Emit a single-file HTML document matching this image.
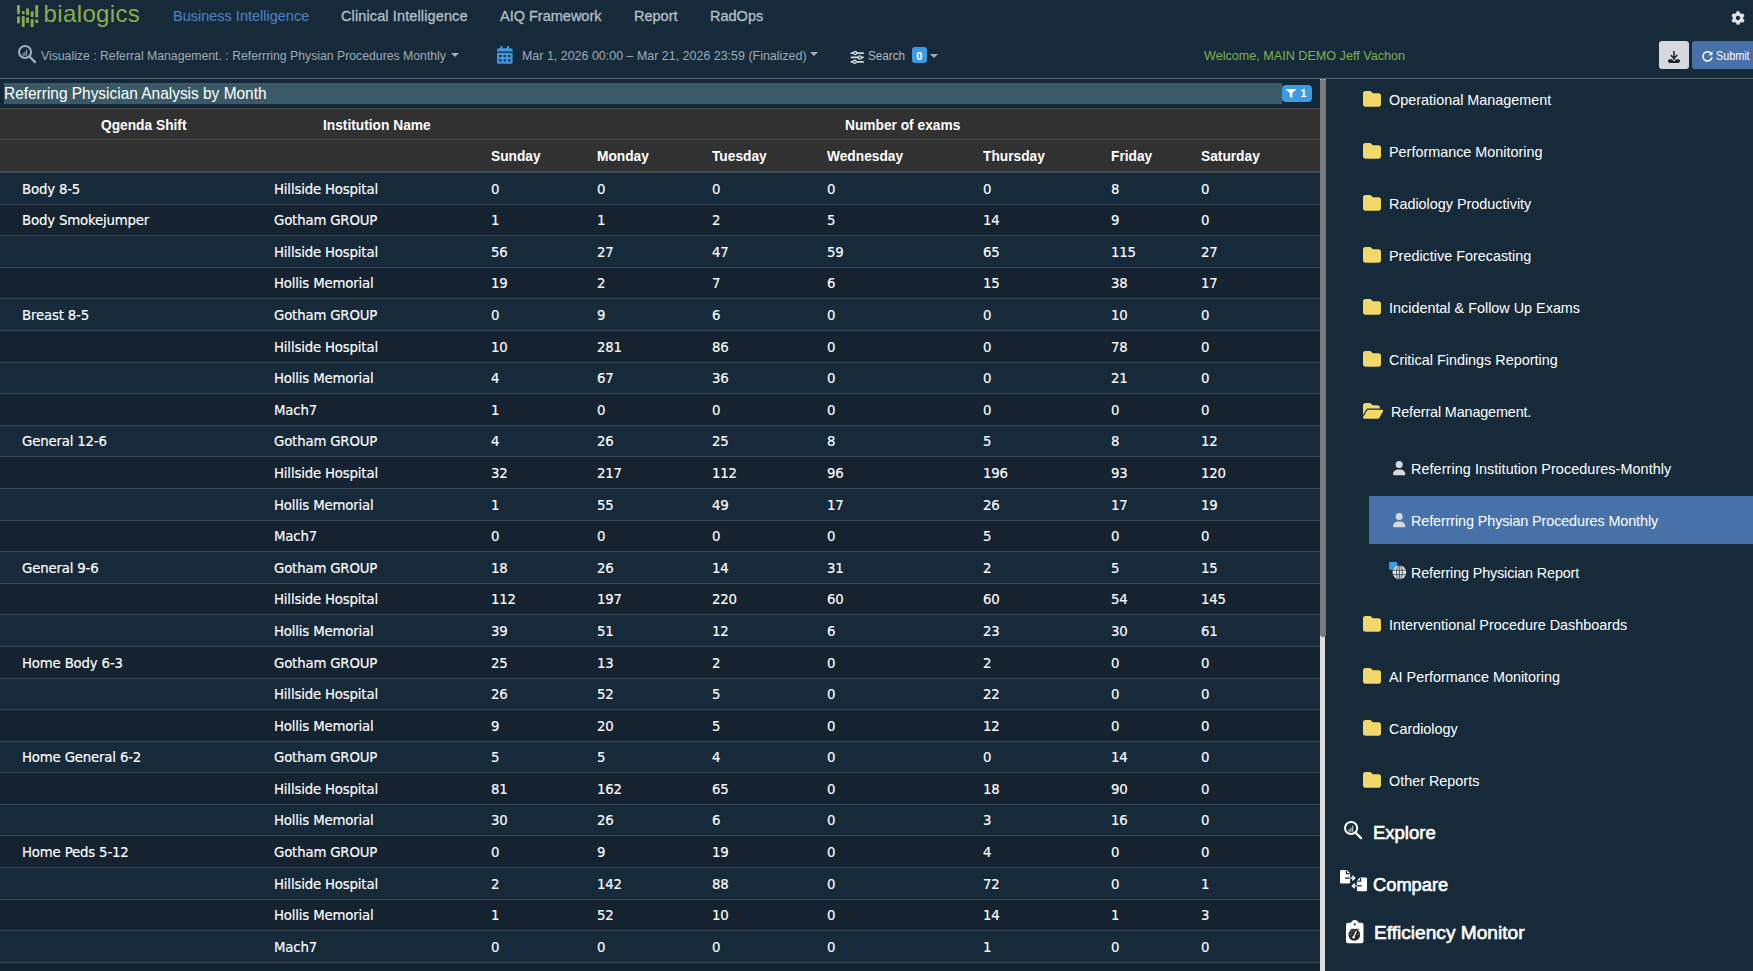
<!DOCTYPE html>
<html lang="en">
<head>
<meta charset="utf-8">
<title>bialogics - Referring Physician Analysis by Month</title>
<style>
*{box-sizing:border-box}
html,body{margin:0;padding:0}
body{width:1753px;height:971px;overflow:hidden;position:relative;background:#162a3a;color:#fff;
 font-family:"Liberation Sans",sans-serif;font-size:14.5px}
svg{display:block;position:absolute;overflow:visible}
.t{position:absolute;white-space:nowrap;transform-origin:0 50%;line-height:20px}

/* ---------- header ---------- */
header{position:absolute;left:0;top:0;width:1753px;height:79px;border-bottom:1px solid #52626f;background:#162a3a}
.logo-mark{left:16.9px;top:4.6px;width:21.3px;height:22.1px}
.logo-mark rect{fill:#86ab4c}
.brand{left:43.6px;top:-1.4px;font-size:24px;line-height:30px;color:#8bae4c;letter-spacing:.36px}
.nav a{color:#b4bfc6;text-decoration:none;font-size:14.5px;top:6.1px;line-height:20px;-webkit-text-stroke:.3px #b4bfc6}
.nav a.on{-webkit-text-stroke:.15px #4d7fbe}
.nav a.on{color:#4d7fbe}
.gear{left:1731px;top:11px;width:14px;height:14px;fill:#dfe3e6}
.tool{font-size:13.4px;color:#9eabb3;top:46px;line-height:20px;transform:scaleX(.915)}
.caret{position:absolute;width:0;height:0;margin-left:-.4px;border-left:4.1px solid transparent;border-right:4.1px solid transparent;border-top:4.5px solid #a3afb6}
.ic-viz{left:17px;top:44.2px;width:20px;height:20px}
.ic-cal{left:497px;top:46px;width:15.6px;height:17.8px;fill:#3c98e0}
.ic-sld{left:850px;top:50.7px;width:14.4px;height:12.8px}
.cnt{position:absolute;left:912px;top:47px;width:14.6px;height:16px;border-radius:3px;background:#3c9be3;color:#fff;font-size:11px;font-weight:700;line-height:18.6px;text-align:center}
.welcome{color:#7fb24a}
.btn{position:absolute;top:41px;height:28px;border-radius:3px}
.btn-dl{left:1659px;width:30px;background:#d5d9de}
.btn-sub{left:1692px;width:70px;background:#4672a9;border-radius:3px 0 0 3px}
.btn-sub .t{left:24.3px;top:5.2px;font-size:12px;color:#fff;line-height:20px;transform:scaleX(.9)}

/* ---------- main ---------- */
main{position:absolute;left:0;top:79px;width:1320px;height:892px;overflow:hidden;background:#14283a}
.titlebar{position:absolute;left:4px;top:4px;width:1278px;height:21px;background:#3b5a68}
.titlebar .t{left:0;top:0;font-size:17px;line-height:21px;color:#fff;transform:scaleX(.908)}
.fbadge{position:absolute;left:1282px;top:6px;width:30px;height:17px;border-radius:4px;background:#3c9be3}
.fbadge svg{left:4.2px;top:4.2px;width:10.2px;height:8.8px;fill:#fff}
.fbadge .t{left:18.4px;top:0;font-size:10.7px;font-weight:700;line-height:17.6px}

table{position:absolute;left:0;top:29px;width:1320px;border-collapse:collapse;table-layout:fixed}
th,td{padding:0;text-align:left;white-space:nowrap;overflow:visible}
thead tr{height:31px;background:#313131}
thead th{border-top:1px solid #4b4b4b;font-weight:700;font-size:15px;color:#fff;line-height:20px}
thead tr.h1 th{padding-top:2.6px}
thead tr.h2{height:32px}
thead tr.h2 th{border-bottom:2px solid #3f4a53;padding-top:1.4px}
thead th.d{padding-left:16px}
thead th span{display:inline-block;transform:scaleX(.916);transform-origin:0 50%}
tbody tr{height:31.6px;background:#172a3a}
tbody tr:nth-child(even){background:#15222f}
tbody tr:first-child{height:32.6px}
tbody tr:first-child td{padding-top:3.6px}
tbody td{padding-top:2.6px;border-bottom:1px solid #394957;font-family:"DejaVu Sans","Liberation Sans",sans-serif;font-size:13.3px;letter-spacing:-.17px;-webkit-text-stroke:.15px #fff;color:#fff;line-height:20px;padding-left:16px}
tbody td.c1{padding-left:22px}

/* ---------- scrollbar ---------- */
.vscroll{position:absolute;left:1320px;top:79px;width:5px;height:892px;background:#dcdcdc}
.vscroll .thumb{position:absolute;left:0;top:0;width:6px;height:558px;background:linear-gradient(90deg,#7c7c7e 0,#7b7c7e 55%,#6b7781 100%);border-radius:0 0 3px 3px}

.vscroll .thumb::before,.vscroll .thumb::after{content:"";position:absolute;top:0;width:1px;height:1px;background:#cdd5db}
.vscroll .thumb::before{left:0}
.vscroll .thumb::after{left:4px}

/* ---------- sidebar ---------- */
aside{position:absolute;left:1326px;top:79px;width:427px;height:892px;overflow:hidden}
aside ul{list-style:none;margin:0;padding:0}
.tree{position:absolute;left:0;top:-5px;width:427px}
.tree li.f{position:relative;height:52px}
.tree li.f>.t,.tree li.r>.t{font-size:14.8px;line-height:20px;top:15.8px;left:63px;color:#fff;transform:scaleX(.972)}
.fo{left:37px;top:17px;width:18px;height:15.75px;fill:#f0d969}
.fo.op{width:20.2px;left:37px;top:17.2px;height:15.7px}
.tree ul{padding:6px 0 0}
.tree li.r:last-child{margin-bottom:3px}
.tree li.r{position:relative;height:48px;margin:0 0 4px 43px}
.tree li.r.sel{background:#4672a9}
.tree li.r>.t{left:41.7px;top:15.2px}
.us{left:24px;top:17px;width:12.4px;height:14.2px;fill:#d3d8dc}
.big{position:absolute;left:0;top:0}
.big .t{font-size:18px;font-weight:400;-webkit-text-stroke:.6px #fff;line-height:24px;color:#fff;transform:scaleX(1.02)}

</style>
</head>
<body>
<header>
  <svg class="logo-mark" viewBox="0 0 21.300 22.100">
    <rect x="0" y="0" width="2.900" height="9.200" rx="1.200"/><rect x="0" y="11.200" width="2.900" height="7.200" rx="1.200"/>
    <rect x="4.800" y="5.900" width="2.900" height="3.300" rx="1.200"/><rect x="4.800" y="10.900" width="2.900" height="11.200" rx="1.200"/>
    <rect x="9.100" y="3.300" width="2.900" height="6.900" rx="1.200"/><rect x="9.100" y="12.200" width="2.900" height="5.900" rx="1.200"/>
    <rect x="13.700" y="6.300" width="2.900" height="5.900" rx="1.200"/><rect x="13.700" y="13.900" width="2.900" height="8.200" rx="1.200"/>
    <rect x="18.300" y="0" width="2.900" height="12.500" rx="1.200"/><rect x="18.300" y="14.500" width="2.900" height="3.600" rx="1.200"/>
  </svg>
  <span class="t brand">bialogics</span>
  <nav class="nav">
    <a class="t on" style="left:173px">Business Intelligence</a>
    <a class="t" style="left:341px;letter-spacing:.12px">Clinical Intelligence</a>
    <a class="t" style="left:500px">AIQ Framework</a>
    <a class="t" style="left:634px">Report</a>
    <a class="t" style="left:710px">RadOps</a>
  </nav>
  <svg class="gear" viewBox="0 0 512 512"><path d="M487.4 315.7l-42.600-24.600c4.300-23.200 4.300-47 0-70.200l42.600-24.600c4.900-2.800 7.100-8.600 5.500-14-11.100-35.600-30-67.800-54.700-94.600-3.800-4.100-10-5.100-14.800-2.300L380.800 110c-17.900-15.400-38.500-27.300-60.800-35.100V25.800c0-5.600-3.900-10.500-9.400-11.700-36.700-8.200-74.300-7.800-109.200 0-5.500 1.200-9.400 6.100-9.400 11.700V75c-22.200 7.900-42.800 19.800-60.800 35.100L88.700 85.500c-4.900-2.800-11-1.900-14.800 2.300-24.700 26.700-43.600 58.900-54.700 94.600-1.700 5.400.6 11.200 5.500 14L67.300 221c-4.300 23.200-4.300 47 0 70.200l-42.600 24.600c-4.900 2.800-7.100 8.600-5.500 14 11.100 35.600 30 67.800 54.700 94.600 3.800 4.100 10 5.100 14.800 2.300l42.600-24.600c17.900 15.400 38.500 27.300 60.800 35.100v49.200c0 5.600 3.900 10.500 9.400 11.700 36.700 8.200 74.300 7.800 109.200 0 5.500-1.200 9.400-6.100 9.400-11.700v-49.200c22.200-7.900 42.800-19.800 60.800-35.100l42.600 24.600c4.900 2.800 11 1.900 14.800-2.300 24.700-26.700 43.600-58.900 54.700-94.600 1.500-5.500-.7-11.300-5.600-14.100zM256 336c-44.100 0-80-35.900-80-80s35.900-80 80-80 80 35.900 80 80-35.900 80-80 80z"/></svg>

  <svg class="ic-viz" viewBox="0 0 20 20" fill="none" stroke="#a3b1ba">
    <circle cx="8.050" cy="8" r="6.050" stroke-width="2"/>
    <path d="M12.700 12.800l5.300 5.300" stroke-width="2.300" stroke-linecap="round"/>
    <path d="M6.200 11.800v-2.500M7.900 11.800v-4M9.600 11.800v-6" stroke-width="1.300" stroke="#8796a0"/>
  </svg>
  <span class="t tool" style="left:41px">Visualize : Referral Management. : Referrring Physian Procedures Monthly</span>
  <i class="caret" style="left:451.5px;top:53px"></i>

  <svg class="ic-cal" viewBox="0 0 448 512"><path d="M0 464c0 26.500 21.500 48 48 48h352c26.500 0 48-21.500 48-48V192H0v272zm320-196c0-6.600 5.400-12 12-12h40c6.600 0 12 5.400 12 12v40c0 6.600-5.400 12-12 12h-40c-6.600 0-12-5.400-12-12v-40zm0 128c0-6.600 5.400-12 12-12h40c6.600 0 12 5.400 12 12v40c0 6.600-5.400 12-12 12h-40c-6.600 0-12-5.400-12-12v-40zM192 268c0-6.600 5.400-12 12-12h40c6.600 0 12 5.400 12 12v40c0 6.600-5.400 12-12 12h-40c-6.600 0-12-5.400-12-12v-40zm0 128c0-6.600 5.400-12 12-12h40c6.600 0 12 5.400 12 12v40c0 6.600-5.400 12-12 12h-40c-6.600 0-12-5.400-12-12v-40zM64 268c0-6.600 5.400-12 12-12h40c6.600 0 12 5.400 12 12v40c0 6.600-5.400 12-12 12H76c-6.600 0-12-5.400-12-12v-40zm0 128c0-6.600 5.400-12 12-12h40c6.600 0 12 5.400 12 12v40c0 6.600-5.400 12-12 12H76c-6.600 0-12-5.400-12-12v-40zM400 64h-48V16c0-8.800-7.200-16-16-16h-32c-8.800 0-16 7.200-16 16v48H160V16c0-8.800-7.200-16-16-16h-32c-8.800 0-16 7.200-16 16v48H48C21.500 64 0 85.500 0 112v48h448v-48c0-26.500-21.500-48-48-48z"/></svg>
  <span class="t tool" style="left:521.5px;transform:scaleX(.93)">Mar 1, 2026 00:00 – Mar 21, 2026 23:59 (Finalized)</span>
  <i class="caret" style="left:810px;top:52px"></i>

  <svg class="ic-sld" viewBox="0 0 14.400 14" fill="none" stroke="#d3dadd" stroke-width="1.900">
    <path d="M0 2.200h14.400M0 7h14.400M0 11.800h14.400"/>
    <g fill="#162a3a" stroke-width="1.500"><circle cx="5" cy="2.200" r="1.700"/><circle cx="10" cy="7" r="1.700"/><circle cx="4.400" cy="11.800" r="1.700"/></g>
  </svg>
  <span class="t tool" style="left:867.5px;color:#adb9c0;transform:scaleX(.873)">Search</span>
  <span class="cnt">0</span>
  <i class="caret" style="left:930.5px;top:53.500px"></i>

  <span class="t tool welcome" style="left:1204px;transform:scaleX(.941)">Welcome, MAIN DEMO Jeff Vachon</span>

  <div class="btn btn-dl">
    <svg style="left:9px;top:10px;width:12px;height:12px" viewBox="0 0 12 12" fill="none" stroke="#222" stroke-width="1.500">
      <path d="M6 0v7.200M2.800 4.200L6 7.400l3.200-3.400" />
      <path d="M1.700 10.100h8.600" stroke-width="3.600" stroke-linecap="round"/>
      <path d="M4.200 8.300L6 10l1.800-1.700" stroke="#d5d9de" stroke-width="1"/>
    </svg>
  </div>
  <div class="btn btn-sub">
    <svg style="left:10px;top:10px;width:11px;height:11px" viewBox="0 0 12 12" fill="none" stroke="#fff" stroke-width="1.600">
      <path d="M10.300 3.200A5 5 0 1 0 11 6.700"/>
      <path d="M11.400 .4v4.200h-4.200z" fill="#fff" stroke="none"/>
    </svg>
    <span class="t">Submit</span>
  </div>
</header>

<main>
  <div class="titlebar"><span class="t">Referring Physician Analysis by Month</span></div>
  <div class="fbadge">
    <svg viewBox="0 0 512 512" preserveAspectRatio="none"><path d="M487.976 0H24.028C2.710 0-8.047 25.866 7.058 40.971L192 225.941V432c0 7.831 3.821 15.170 10.237 19.662l80 55.980C298.020 518.690 320 507.493 320 487.980V225.941l184.947-184.970C520.021 25.896 509.338 0 487.976 0z"/></svg>
    <span class="t">1</span>
  </div>
  <table>
    <colgroup><col style="width:258px"><col style="width:217px"><col style="width:106px"><col style="width:115px"><col style="width:115px"><col style="width:156px"><col style="width:128px"><col style="width:90px"><col style="width:100px"><col></colgroup>
    <thead>
      <tr class="h1"><th style="padding-left:101px"><span>Qgenda Shift</span></th><th style="padding-left:65px"><span>Institution Name</span></th><th colspan="8" style="padding-left:370px"><span>Number of exams</span></th></tr>
      <tr class="h2"><th></th><th></th><th class="d"><span>Sunday</span></th><th class="d"><span>Monday</span></th><th class="d"><span>Tuesday</span></th><th class="d"><span>Wednesday</span></th><th class="d"><span>Thursday</span></th><th class="d"><span>Friday</span></th><th class="d"><span>Saturday</span></th><th></th></tr>
    </thead>
    <tbody>
<tr><td class="c1">Body 8-5</td><td class="c2">Hillside Hospital</td><td>0</td><td>0</td><td>0</td><td>0</td><td>0</td><td>8</td><td>0</td><td></td></tr>
<tr><td class="c1">Body Smokejumper</td><td class="c2">Gotham GROUP</td><td>1</td><td>1</td><td>2</td><td>5</td><td>14</td><td>9</td><td>0</td><td></td></tr>
<tr><td class="c1"></td><td class="c2">Hillside Hospital</td><td>56</td><td>27</td><td>47</td><td>59</td><td>65</td><td>115</td><td>27</td><td></td></tr>
<tr><td class="c1"></td><td class="c2">Hollis Memorial</td><td>19</td><td>2</td><td>7</td><td>6</td><td>15</td><td>38</td><td>17</td><td></td></tr>
<tr><td class="c1">Breast 8-5</td><td class="c2">Gotham GROUP</td><td>0</td><td>9</td><td>6</td><td>0</td><td>0</td><td>10</td><td>0</td><td></td></tr>
<tr><td class="c1"></td><td class="c2">Hillside Hospital</td><td>10</td><td>281</td><td>86</td><td>0</td><td>0</td><td>78</td><td>0</td><td></td></tr>
<tr><td class="c1"></td><td class="c2">Hollis Memorial</td><td>4</td><td>67</td><td>36</td><td>0</td><td>0</td><td>21</td><td>0</td><td></td></tr>
<tr><td class="c1"></td><td class="c2">Mach7</td><td>1</td><td>0</td><td>0</td><td>0</td><td>0</td><td>0</td><td>0</td><td></td></tr>
<tr><td class="c1">General 12-6</td><td class="c2">Gotham GROUP</td><td>4</td><td>26</td><td>25</td><td>8</td><td>5</td><td>8</td><td>12</td><td></td></tr>
<tr><td class="c1"></td><td class="c2">Hillside Hospital</td><td>32</td><td>217</td><td>112</td><td>96</td><td>196</td><td>93</td><td>120</td><td></td></tr>
<tr><td class="c1"></td><td class="c2">Hollis Memorial</td><td>1</td><td>55</td><td>49</td><td>17</td><td>26</td><td>17</td><td>19</td><td></td></tr>
<tr><td class="c1"></td><td class="c2">Mach7</td><td>0</td><td>0</td><td>0</td><td>0</td><td>5</td><td>0</td><td>0</td><td></td></tr>
<tr><td class="c1">General 9-6</td><td class="c2">Gotham GROUP</td><td>18</td><td>26</td><td>14</td><td>31</td><td>2</td><td>5</td><td>15</td><td></td></tr>
<tr><td class="c1"></td><td class="c2">Hillside Hospital</td><td>112</td><td>197</td><td>220</td><td>60</td><td>60</td><td>54</td><td>145</td><td></td></tr>
<tr><td class="c1"></td><td class="c2">Hollis Memorial</td><td>39</td><td>51</td><td>12</td><td>6</td><td>23</td><td>30</td><td>61</td><td></td></tr>
<tr><td class="c1">Home Body 6-3</td><td class="c2">Gotham GROUP</td><td>25</td><td>13</td><td>2</td><td>0</td><td>2</td><td>0</td><td>0</td><td></td></tr>
<tr><td class="c1"></td><td class="c2">Hillside Hospital</td><td>26</td><td>52</td><td>5</td><td>0</td><td>22</td><td>0</td><td>0</td><td></td></tr>
<tr><td class="c1"></td><td class="c2">Hollis Memorial</td><td>9</td><td>20</td><td>5</td><td>0</td><td>12</td><td>0</td><td>0</td><td></td></tr>
<tr><td class="c1">Home General 6-2</td><td class="c2">Gotham GROUP</td><td>5</td><td>5</td><td>4</td><td>0</td><td>0</td><td>14</td><td>0</td><td></td></tr>
<tr><td class="c1"></td><td class="c2">Hillside Hospital</td><td>81</td><td>162</td><td>65</td><td>0</td><td>18</td><td>90</td><td>0</td><td></td></tr>
<tr><td class="c1"></td><td class="c2">Hollis Memorial</td><td>30</td><td>26</td><td>6</td><td>0</td><td>3</td><td>16</td><td>0</td><td></td></tr>
<tr><td class="c1">Home Peds 5-12</td><td class="c2">Gotham GROUP</td><td>0</td><td>9</td><td>19</td><td>0</td><td>4</td><td>0</td><td>0</td><td></td></tr>
<tr><td class="c1"></td><td class="c2">Hillside Hospital</td><td>2</td><td>142</td><td>88</td><td>0</td><td>72</td><td>0</td><td>1</td><td></td></tr>
<tr><td class="c1"></td><td class="c2">Hollis Memorial</td><td>1</td><td>52</td><td>10</td><td>0</td><td>14</td><td>1</td><td>3</td><td></td></tr>
<tr><td class="c1"></td><td class="c2">Mach7</td><td>0</td><td>0</td><td>0</td><td>0</td><td>1</td><td>0</td><td>0</td><td></td></tr>
<tr><td class="c1"></td><td class="c2"></td><td></td><td></td><td></td><td></td><td></td><td></td><td></td><td></td></tr>
    </tbody>
  </table>
</main>

<div class="vscroll"><div class="thumb"></div></div>
<aside>
  <ul class="tree">
    <li class="f"><svg class="fo" viewBox="0 32 512 448"><path d="M64 480H448c35.300 0 64-28.700 64-64V160c0-35.300-28.700-64-64-64H288c-10.100 0-19.600-4.700-25.600-12.800L243.200 57.600C231.100 41.500 212.100 32 192 32H64C28.700 32 0 60.700 0 96V416c0 35.300 28.700 64 64 64z"/></svg><span class="t">Operational Management</span></li>
    <li class="f"><svg class="fo" viewBox="0 32 512 448"><path d="M64 480H448c35.300 0 64-28.700 64-64V160c0-35.300-28.700-64-64-64H288c-10.100 0-19.600-4.700-25.600-12.800L243.200 57.600C231.100 41.500 212.100 32 192 32H64C28.700 32 0 60.700 0 96V416c0 35.300 28.700 64 64 64z"/></svg><span class="t">Performance Monitoring</span></li>
    <li class="f"><svg class="fo" viewBox="0 32 512 448"><path d="M64 480H448c35.300 0 64-28.700 64-64V160c0-35.300-28.700-64-64-64H288c-10.100 0-19.600-4.700-25.600-12.800L243.200 57.600C231.100 41.500 212.100 32 192 32H64C28.700 32 0 60.700 0 96V416c0 35.300 28.700 64 64 64z"/></svg><span class="t">Radiology Productivity</span></li>
    <li class="f"><svg class="fo" viewBox="0 32 512 448"><path d="M64 480H448c35.300 0 64-28.700 64-64V160c0-35.300-28.700-64-64-64H288c-10.100 0-19.600-4.700-25.600-12.800L243.200 57.600C231.100 41.500 212.100 32 192 32H64C28.700 32 0 60.700 0 96V416c0 35.300 28.700 64 64 64z"/></svg><span class="t">Predictive Forecasting</span></li>
    <li class="f"><svg class="fo" viewBox="0 32 512 448"><path d="M64 480H448c35.300 0 64-28.700 64-64V160c0-35.300-28.700-64-64-64H288c-10.100 0-19.600-4.700-25.600-12.800L243.200 57.600C231.100 41.500 212.100 32 192 32H64C28.700 32 0 60.700 0 96V416c0 35.300 28.700 64 64 64z"/></svg><span class="t">Incidental &amp; Follow Up Exams</span></li>
    <li class="f"><svg class="fo" viewBox="0 32 512 448"><path d="M64 480H448c35.300 0 64-28.700 64-64V160c0-35.300-28.700-64-64-64H288c-10.100 0-19.600-4.700-25.600-12.800L243.200 57.600C231.100 41.500 212.100 32 192 32H64C28.700 32 0 60.700 0 96V416c0 35.300 28.700 64 64 64z"/></svg><span class="t">Critical Findings Reporting</span></li>
    <li class="f"><svg class="fo op" viewBox="0 32 576 448"><path d="M88.700 223.800L0 375.800V96C0 60.700 28.700 32 64 32H181.500c17 0 33.300 6.700 45.300 18.700l26.500 26.500c12 12 28.300 18.700 45.300 18.700H416c35.300 0 64 28.700 64 64v32H144c-22.800 0-43.800 12.100-55.300 31.800zm27.600 16.100C122.100 230 132.600 224 144 224H544c11.500 0 22 6.100 27.700 16.100s5.700 22.200-.100 32.100l-112 192C453.900 474 443.400 480 432 480H32c-11.500 0-22-6.100-27.700-16.100s-5.700-22.200 .100-32.100l112-192z"/></svg><span class="t" style="left:65.300px;letter-spacing:-.15px">Referral Management.</span></li>
    <li>
      <ul>
        <li class="r"><svg class="us" viewBox="0 0 448 512"><path d="M224 256A128 128 0 1 0 224 0a128 128 0 1 0 0 256zm-45.700 48C79.800 304 0 383.800 0 482.300C0 498.700 13.300 512 29.700 512H418.300c16.400 0 29.700-13.300 29.700-29.700C448 383.800 368.200 304 269.700 304H178.300z"/></svg><span class="t" style="letter-spacing:.075px">Referring Institution Procedures-Monthly</span></li>
        <li class="r sel"><svg class="us" viewBox="0 0 448 512"><path d="M224 256A128 128 0 1 0 224 0a128 128 0 1 0 0 256zm-45.700 48C79.800 304 0 383.800 0 482.300C0 498.700 13.300 512 29.700 512H418.300c16.400 0 29.700-13.300 29.700-29.700C448 383.800 368.200 304 269.700 304H178.300z"/></svg><span class="t" style="letter-spacing:-.11px">Referrring Physian Procedures Monthly</span></li>
        <li class="r">
          <svg style="left:19.700px;top:13.700px;width:17.500px;height:17.500px" viewBox="0 0 18 18">
            <rect x="0" y="0" width="8.400" height="8" rx="1" fill="#3c9be3"/>
            <circle cx="10.700" cy="10.700" r="7" fill="#dfe3e6"/>
            <g fill="none" stroke="#3a4752" stroke-width=".900"><ellipse cx="10.700" cy="10.700" rx="3" ry="7"/><path d="M3.700 8.400h14M3.700 13h14M10.700 3.700v14"/></g>
          </svg>
          <span class="t" style="letter-spacing:-.15px">Referring Physician Report</span></li>
      </ul>
    </li>
    <li class="f"><svg class="fo" viewBox="0 32 512 448"><path d="M64 480H448c35.300 0 64-28.700 64-64V160c0-35.300-28.700-64-64-64H288c-10.100 0-19.600-4.700-25.600-12.800L243.200 57.600C231.100 41.500 212.100 32 192 32H64C28.700 32 0 60.700 0 96V416c0 35.300 28.700 64 64 64z"/></svg><span class="t">Interventional Procedure Dashboards</span></li>
    <li class="f"><svg class="fo" viewBox="0 32 512 448"><path d="M64 480H448c35.300 0 64-28.700 64-64V160c0-35.300-28.700-64-64-64H288c-10.100 0-19.600-4.700-25.600-12.800L243.200 57.600C231.100 41.500 212.100 32 192 32H64C28.700 32 0 60.700 0 96V416c0 35.300 28.700 64 64 64z"/></svg><span class="t">AI Performance Monitoring</span></li>
    <li class="f"><svg class="fo" viewBox="0 32 512 448"><path d="M64 480H448c35.300 0 64-28.700 64-64V160c0-35.300-28.700-64-64-64H288c-10.100 0-19.600-4.700-25.600-12.800L243.200 57.600C231.100 41.500 212.100 32 192 32H64C28.700 32 0 60.700 0 96V416c0 35.300 28.700 64 64 64z"/></svg><span class="t">Cardiology</span></li>
    <li class="f"><svg class="fo" viewBox="0 32 512 448"><path d="M64 480H448c35.300 0 64-28.700 64-64V160c0-35.300-28.700-64-64-64H288c-10.100 0-19.600-4.700-25.600-12.800L243.200 57.600C231.100 41.500 212.100 32 192 32H64C28.700 32 0 60.700 0 96V416c0 35.300 28.700 64 64 64z"/></svg><span class="t">Other Reports</span></li>
  </ul>
  <ul class="big">
    <li>
      <svg style="left:17px;top:741px;width:20px;height:20px" viewBox="0 0 20 20" fill="none" stroke="#fff">
        <circle cx="8.100" cy="8" r="6.100" stroke-width="2"/><path d="M12.700 12.800l5.300 5.300" stroke-width="2.300" stroke-linecap="round"/><path d="M6.200 11.800v-2.500M7.900 11.800v-4M9.600 11.800v-6" stroke-width="1.300" stroke="#b5bec5"/>
      </svg>
      <span class="t" style="left:47px;top:741.800px;transform:scaleX(1.027)">Explore</span></li>
    <li>
      <svg style="left:14px;top:791.400px;width:27px;height:21.400px" viewBox="0 0 27 21.400" fill="#fff">
        <path d="M1.200 0h5.700l3.200 3.200v9a1.200 1.200 0 0 1-1.200 1.200H1.200A1.200 1.200 0 0 1 0 12.200v-11A1.200 1.200 0 0 1 1.200 0z"/>
        <path d="M25.800 7.500h-5.700l-3.200 3.200v9.400a1.200 1.200 0 0 0 1.200 1.200h7.700a1.200 1.200 0 0 0 1.200-1.200V8.700a1.200 1.200 0 0 0-1.200-1.200z"/>
        <g fill="none" stroke="#162a3a" stroke-width="1.200"><path d="M5 8.100h5.100M16.900 15.900h5M6.400 .400v3.300h3.300M20.600 7.900v3.300h-3.300" /></g>
        <g fill="none" stroke="#fff" stroke-width="1.400"><path d="M10.100 8.100h4.200M12.200 5.800l2.400 2.300-2.400 2.300"/><path d="M16.900 15.900h-4.200M14.800 13.600l-2.400 2.300 2.400 2.300"/></g>
      </svg>
      <span class="t" style="left:46.500px;top:793.800px;transform:scaleX(1.016)">Compare</span></li>
    <li>
      <svg style="left:19.800px;top:841.100px;width:17.500px;height:23.200px" viewBox="0 0 17.500 23.200">
        <path d="M2 2.800h3C5.500 1.200 7 0 8.700 0s3.300 1.200 4.100 2.800h2.700a2 2 0 0 1 2 2v16.400a2 2 0 0 1-2 2H2a2 2 0 0 1-2-2V4.800a2 2 0 0 1 2-2z" fill="#fff"/>
        <circle cx="8.700" cy="4.300" r="1.100" fill="#162a3a"/>
        <circle cx="8.300" cy="14.800" r="5.900" fill="#2a2727"/>
        <path d="M4.600 9.300h8.200" stroke="#2a2727" stroke-width=".900" fill="none"/>
        <path d="M7.500 17.300l2.700-5.700" stroke="#fff" stroke-width="1.300" stroke-linecap="round" fill="none"/>
        <circle cx="7.600" cy="17.200" r="1.200" fill="#fff"/>
        <g fill="#c9c9c9"><circle cx="4.600" cy="14.600" r=".600"/><circle cx="5.800" cy="12" r=".600"/><circle cx="12" cy="14.600" r=".600"/><circle cx="7.800" cy="10.700" r=".500"/></g>
      </svg>
      <span class="t" style="left:48px;top:842px;transform:scaleX(1.062)">Efficiency Monitor</span></li>
  </ul>
</aside>

</body>
</html>
